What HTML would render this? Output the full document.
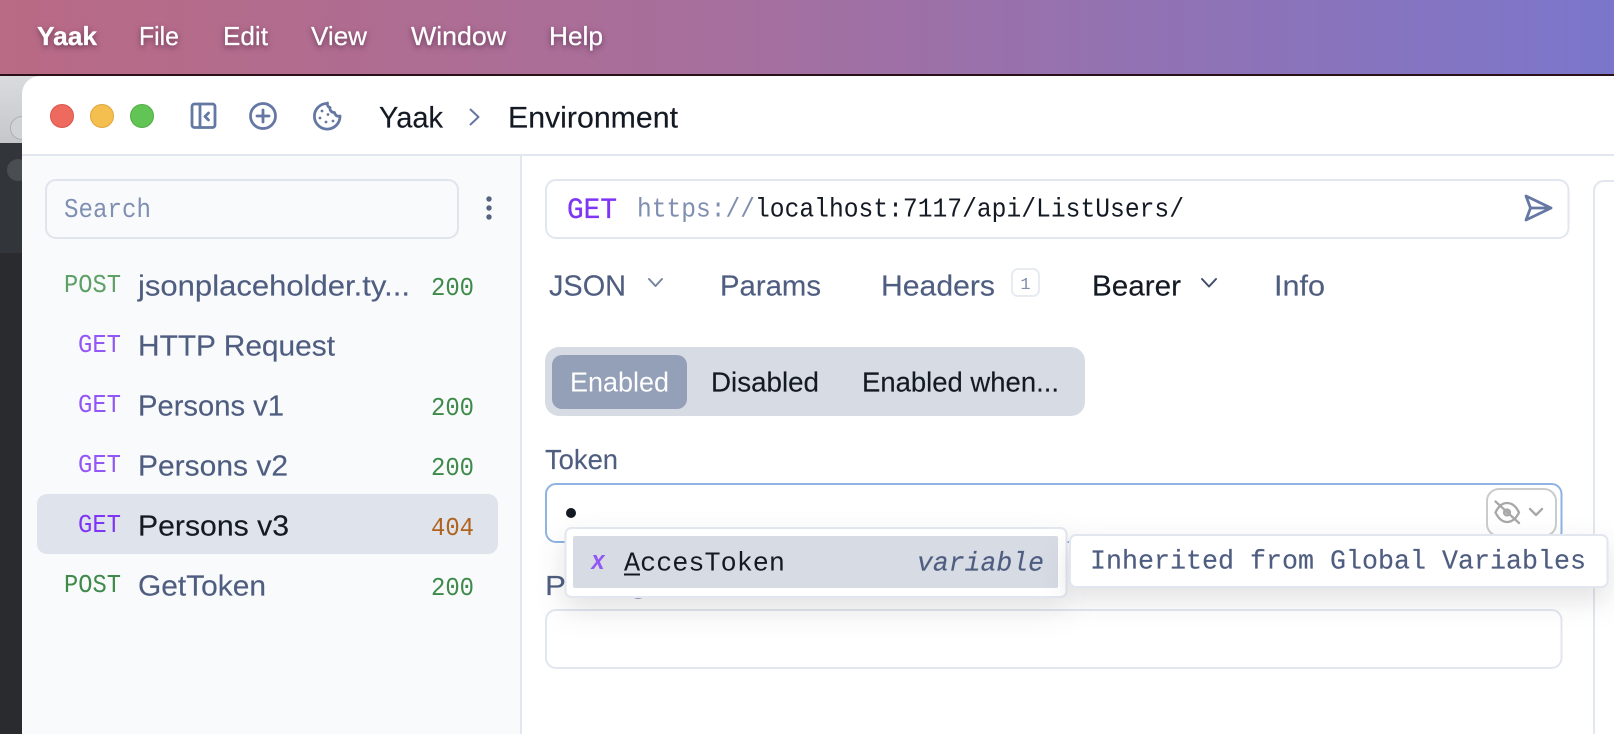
<!DOCTYPE html>
<html lang="en">
<head>
<meta charset="utf-8">
<title>Yaak</title>
<style>
html,body{margin:0;padding:0;width:1614px;height:734px;overflow:hidden;background:#fff}
svg{display:block;width:1614px;height:734px;overflow:hidden}
text{font-family:"Liberation Sans",sans-serif;white-space:pre}
.m{font-family:"Liberation Mono",monospace}
.menu{font-size:26px;fill:#fff;stroke:#fff;stroke-width:.25px;filter:drop-shadow(0 2px 3px rgba(40,10,40,.5))}
.t{fill:#4f5e80;stroke:#4f5e80;stroke-width:.15px}
.d{fill:#141a24;stroke:#141a24;stroke-width:.15px}
.item{font-size:28.500px}
.meth{font-size:26px}
.st{font-size:26px}
.ic{fill:none;stroke:#6478a3;stroke-width:2.800;stroke-linecap:round;stroke-linejoin:round}
.pop{filter:drop-shadow(0 12px 14px rgba(30,30,50,.13))}
</style>
</head>
<body>
<svg width="1614" height="734" viewBox="0 0 1614 734" xmlns="http://www.w3.org/2000/svg">
<defs>
<linearGradient id="bar" x1="0" y1="0" x2="1" y2="0">
<stop offset="0" stop-color="#b96a84"/>
<stop offset=".45" stop-color="#a66f9d"/>
<stop offset="1" stop-color="#7b76cb"/>
</linearGradient>
<linearGradient id="gr" x1="0" y1="0" x2="0" y2="1">
<stop offset="0" stop-color="#dadbde"/>
<stop offset="1" stop-color="#c4c6ca"/>
</linearGradient>
</defs>

<!-- backdrop -->
<rect x="0" y="76" width="60" height="70" fill="url(#gr)"/>
<circle cx="22" cy="128" r="11.500" fill="#d0d2d6" stroke="#aeb0b4" stroke-width="1"/>
<rect x="0" y="143" width="40" height="591" fill="#2a2b2e"/>
<rect x="0" y="143" width="40" height="110" fill="#32353a"/>
<circle cx="18" cy="170" r="11" fill="#4a4d52"/>

<!-- menu bar -->
<rect x="0" y="0" width="1614" height="75" fill="url(#bar)"/>
<rect x="0" y="74" width="1614" height="2" fill="#2a1018"/>
<text class="menu" x="37" y="45" font-weight="700" textLength="60" lengthAdjust="spacingAndGlyphs">Yaak</text>
<text class="menu" x="139" y="45" textLength="40" lengthAdjust="spacingAndGlyphs">File</text>
<text class="menu" x="223" y="45" textLength="45" lengthAdjust="spacingAndGlyphs">Edit</text>
<text class="menu" x="311" y="45" textLength="56" lengthAdjust="spacingAndGlyphs">View</text>
<text class="menu" x="411" y="45" textLength="95" lengthAdjust="spacingAndGlyphs">Window</text>
<text class="menu" x="549" y="45" textLength="54" lengthAdjust="spacingAndGlyphs">Help</text>

<!-- window -->
<path d="M22 734V94a18 18 0 0 1 18-18H1614V734Z" fill="#fff"/>
<rect x="22" y="156" width="498" height="578" fill="#f9fafc"/>
<rect x="22" y="154" width="1592" height="2" fill="#e2e6ee"/>
<rect x="520" y="156" width="2" height="578" fill="#e2e6ee"/>

<!-- traffic lights -->
<circle cx="62" cy="116" r="11.500" fill="#ee6a5f" stroke="#d8564c" stroke-width="1"/>
<circle cx="102" cy="116" r="11.500" fill="#f5bf4f" stroke="#dfa63c" stroke-width="1"/>
<circle cx="142" cy="116" r="11.500" fill="#61c454" stroke="#52ad47" stroke-width="1"/>

<!-- title icons -->
<rect class="ic" x="192" y="104" width="23" height="23.500" rx="2.500"/>
<path class="ic" d="M200 104V127.500M208.500 113l-3.500 3.500 3.500 3.500"/>
<circle class="ic" cx="263" cy="116" r="12.500"/>
<path class="ic" d="M263 110V122M257 116H269"/>
<path class="ic" d="M327 103.500A12.800 12.800 0 1 0 340 116c-3 1-5-1-5.500-3.500-3 0-5-2-4.500-5-2-.5-3-2.500-2.500-4.500Z"/>
<g fill="#6478a3"><circle cx="322" cy="111" r="1.400"/><circle cx="328" cy="114.500" r="1.400"/><circle cx="320" cy="118" r="1.400"/><circle cx="326" cy="122" r="1.400"/><circle cx="333" cy="121" r="1.400"/></g>

<text class="d" x="379" y="127.500" font-size="29.500" textLength="64" lengthAdjust="spacingAndGlyphs">Yaak</text>
<path d="M470.500 109.500l8 7.500-8 7.500" fill="none" stroke="#6478a3" stroke-width="2" stroke-linecap="round" stroke-linejoin="round"/>
<text class="d" x="508" y="127.500" font-size="29.500" textLength="170" lengthAdjust="spacingAndGlyphs">Environment</text>

<!-- search -->
<rect x="46" y="180" width="412" height="58" rx="10" fill="#f9fafc" stroke="#e0e4ec" stroke-width="2"/>
<text class="m" x="64" y="217" font-size="26.500" fill="#8090b2" textLength="87" lengthAdjust="spacingAndGlyphs">Search</text>
<g fill="#55647f"><circle cx="489" cy="199" r="2.700"/><circle cx="489" cy="208" r="2.700"/><circle cx="489" cy="217" r="2.700"/></g>

<!-- sidebar items -->
<rect x="37" y="494" width="461" height="60" rx="10" fill="#dfe3eb"/>

<text class="m meth" x="64" y="292" fill="#5ea065" textLength="57" lengthAdjust="spacingAndGlyphs">POST</text>
<text class="t item" x="138" y="295.500" textLength="272" lengthAdjust="spacingAndGlyphs">jsonplaceholder.ty...</text>
<text class="m st" x="431" y="295" fill="#3f8a4a" textLength="43" lengthAdjust="spacingAndGlyphs">200</text>

<text class="m meth" x="78" y="352" fill="#9357f5" textLength="43" lengthAdjust="spacingAndGlyphs">GET</text>
<text class="t item" x="138" y="355.500" textLength="197" lengthAdjust="spacingAndGlyphs">HTTP Request</text>

<text class="m meth" x="78" y="412" fill="#9357f5" textLength="43" lengthAdjust="spacingAndGlyphs">GET</text>
<text class="t item" x="138" y="415.500" textLength="146" lengthAdjust="spacingAndGlyphs">Persons v1</text>
<text class="m st" x="431" y="415" fill="#3f8a4a" textLength="43" lengthAdjust="spacingAndGlyphs">200</text>

<text class="m meth" x="78" y="472" fill="#9357f5" textLength="43" lengthAdjust="spacingAndGlyphs">GET</text>
<text class="t item" x="138" y="475.500" textLength="150" lengthAdjust="spacingAndGlyphs">Persons v2</text>
<text class="m st" x="431" y="475" fill="#3f8a4a" textLength="43" lengthAdjust="spacingAndGlyphs">200</text>

<text class="m meth" x="78" y="532" fill="#7f35f5" textLength="43" lengthAdjust="spacingAndGlyphs">GET</text>
<text class="d item" x="138" y="535.500" textLength="151" lengthAdjust="spacingAndGlyphs">Persons v3</text>
<text class="m st" x="431" y="535" fill="#b0621f" textLength="43" lengthAdjust="spacingAndGlyphs">404</text>

<text class="m meth" x="64" y="592" fill="#3f8a4a" textLength="57" lengthAdjust="spacingAndGlyphs">POST</text>
<text class="t item" x="138" y="595.500" textLength="128" lengthAdjust="spacingAndGlyphs">GetToken</text>
<text class="m st" x="431" y="595" fill="#3f8a4a" textLength="43" lengthAdjust="spacingAndGlyphs">200</text>

<!-- url bar -->
<rect x="546" y="180" width="1022.500" height="58" rx="10" fill="#fff" stroke="#e2e6ee" stroke-width="2"/>
<text class="m" x="567" y="218" font-size="30" fill="#7f35f5" stroke="#7f35f5" stroke-width=".3" textLength="50" lengthAdjust="spacingAndGlyphs">GET</text>
<text class="m" x="637" y="216.500" font-size="27" fill="#7f8fb0" textLength="118" lengthAdjust="spacingAndGlyphs">https://</text>
<text class="m" x="755" y="216.500" font-size="27" fill="#141a24" textLength="429" lengthAdjust="spacingAndGlyphs">localhost:7117/api/ListUsers/</text>
<path class="ic" d="M1526 196L1551 208L1526 220L1530.500 208ZM1530.500 208H1551"/>
<path d="M1615 181H1604a10 10 0 0 0-10 10V734" fill="#fff" stroke="#e2e6ee" stroke-width="2"/>

<!-- tabs -->
<text class="t" x="549" y="295.500" font-size="29" textLength="77" lengthAdjust="spacingAndGlyphs">JSON</text>
<path d="M649 279l6.500 7 6.500-7" fill="none" stroke="#76859f" stroke-width="2" stroke-linecap="round" stroke-linejoin="round"/>
<text class="t" x="720" y="295.500" font-size="29" textLength="101" lengthAdjust="spacingAndGlyphs">Params</text>
<text class="t" x="881" y="295.500" font-size="29" textLength="114" lengthAdjust="spacingAndGlyphs">Headers</text>
<rect x="1012" y="269" width="27" height="27" rx="6" fill="#fff" stroke="#e8ebf1" stroke-width="2"/>
<text class="m" x="1025.500" y="289" font-size="17" fill="#8090ab" text-anchor="middle">1</text>
<text class="d" x="1092" y="295.500" font-size="29" textLength="89" lengthAdjust="spacingAndGlyphs">Bearer</text>
<path d="M1202 279l7 7.500 7-7.500" fill="none" stroke="#3f4e6b" stroke-width="2" stroke-linecap="round" stroke-linejoin="round"/>
<text class="t" x="1274" y="295.500" font-size="29" textLength="51" lengthAdjust="spacingAndGlyphs">Info</text>

<!-- segmented -->
<rect x="545" y="347" width="540" height="69" rx="14" fill="#d7dbe4"/>
<rect x="552" y="355" width="135" height="54" rx="10" fill="#949fb8"/>
<text x="570" y="391.500" font-size="27.500" fill="#fff" textLength="99" lengthAdjust="spacingAndGlyphs">Enabled</text>
<text class="d" x="711" y="391.500" font-size="27.500" textLength="108" lengthAdjust="spacingAndGlyphs">Disabled</text>
<text class="d" x="862" y="391.500" font-size="27.500" textLength="197" lengthAdjust="spacingAndGlyphs">Enabled when...</text>

<!-- token -->
<text class="t" x="545" y="469" font-size="28" textLength="73" lengthAdjust="spacingAndGlyphs">Token</text>
<rect x="546" y="484" width="1015.500" height="58" rx="10" fill="#fff" stroke="#8fb3e3" stroke-width="2"/>
<circle cx="571" cy="513" r="5" fill="#141a24"/>
<rect x="1487" y="489" width="69" height="47" rx="12" fill="#fff" stroke="#cbcbcb" stroke-width="2"/>
<g fill="none" stroke="#a8a8a8" stroke-width="2.300" stroke-linecap="round" stroke-linejoin="round">
<path d="M1495.500 512.500C1499 505 1503 503 1507 503C1511 503 1515.500 505 1519 512.500C1515.500 519.500 1511 522 1507 522C1503 522 1499 519.500 1495.500 512.500Z"/>
<circle cx="1507" cy="512.500" r="3" fill="#c4c4c4"/>
<path d="M1495.500 501.500L1519 523"/>
<path d="M1530 509l6 6 6-6"/>
</g>

<!-- prefix -->
<text class="t" x="545" y="595" font-size="28" textLength="80" lengthAdjust="spacingAndGlyphs">Prefix</text>
<circle cx="638" cy="590" r="8" fill="none" stroke="#9aa5bb" stroke-width="2"/>
<rect x="546" y="610" width="1015.500" height="58" rx="10" fill="#fff" stroke="#e2e6ee" stroke-width="2"/>

<!-- autocomplete popup -->
<g class="pop">
<rect x="565.500" y="528" width="501" height="69" rx="6" fill="#fff" stroke="#e2e6ee" stroke-width="2"/>
</g>
<rect x="573" y="536" width="485" height="52" rx="2" fill="#d7dbe4"/>
<text class="m" x="591" y="569" font-size="26.500" font-style="italic" font-weight="700" fill="#9357f5" textLength="14" lengthAdjust="spacingAndGlyphs">x</text>
<text class="m" x="624" y="570.500" font-size="27" fill="#141a24" textLength="161" lengthAdjust="spacingAndGlyphs">AccesToken</text>
<rect x="624" y="573.500" width="16" height="2" fill="#141a24"/>
<text class="m t" x="917" y="570.500" font-size="27" font-style="italic" textLength="127" lengthAdjust="spacingAndGlyphs">variable</text>

<!-- tooltip -->
<g class="pop">
<rect x="1070" y="535" width="537.500" height="52" rx="6" fill="#fff" stroke="#e2e6ee" stroke-width="2"/>
</g>
<text class="m t" x="1090" y="568.500" font-size="27" textLength="496" lengthAdjust="spacingAndGlyphs">Inherited from Global Variables</text>
</svg>
</body>
</html>
